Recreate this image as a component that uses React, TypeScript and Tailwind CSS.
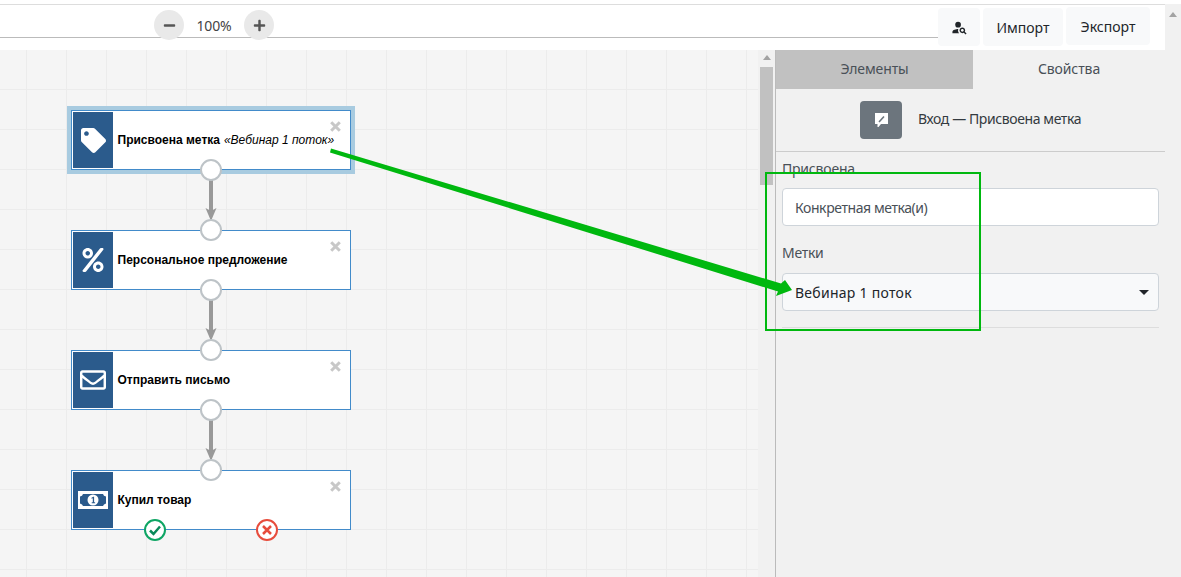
import type { ReactNode } from 'react';
import { FaTag, FaPercent, FaRegEnvelope, FaMinus, FaPlus } from 'react-icons/fa';
import { MdPersonSearch } from 'react-icons/md';

interface FlowNodeProps {
    top: string;
    icon: ReactNode;
    selected?: boolean;
    children: ReactNode;
}

function Port({ className }: { className: string }) {
    return <div className={`absolute left-[200px] w-[22px] h-[22px] rounded-full bg-white border-[2px] border-[#bdc3c7] z-10 ${className}`} />;
}

function FlowNode({ top, icon, selected, children }: FlowNodeProps) {
    return (
        <div className={`absolute left-[71px] w-[280px] h-[60px] bg-white border border-[#428bca] p-px flex ${top} ${selected ? 'outline-4 outline-[#a8cbe0]' : ''}`}>
            <div className="w-[40px] h-full bg-[#2b5b8c] flex items-center justify-center text-white shrink-0">{icon}</div>
            <div className="ml-[4.5px] flex items-center text-[12px] text-black font-['Liberation_Sans',sans-serif] whitespace-nowrap">{children}</div>
            <svg className="absolute right-[9px] top-[10px]" width="11" height="11" viewBox="0 0 11 11">
                <path d="M1.2 1.2 L9.8 9.8 M9.8 1.2 L1.2 9.8" stroke="#c8c8c8" strokeWidth="3" fill="none" />
            </svg>
        </div>
    );
}

function Connector({ top }: { top: string }) {
    return (
        <svg className={`absolute left-[205px] ${top}`} width="12" height="42" viewBox="0 0 12 42">
            <rect x="4" y="0" width="4" height="33" fill="#999999" />
            <path d="M0.5 28 L6 31 L11.5 28 L6 41 Z" fill="#999999" />
        </svg>
    );
}

function ToolButton({ className, children }: { className: string; children: ReactNode }) {
    return <div className={`h-[38px] bg-[#f8f9fa] rounded flex items-center justify-center text-[14px] text-[#212529] ${className}`}>{children}</div>;
}

function BillIcon() {
    return (
        <svg width="30" height="18" viewBox="0 0 30 18">
            <rect width="30" height="18" fill="white" />
            <path d="M5 3 H25 Q25.5 5 28 5.5 V12.5 Q25.5 13 25 15 H5 Q4.5 13 2 12.5 V5.5 Q4.5 5 5 3 Z" fill="#2b5b8c" />
            <circle cx="15" cy="9" r="5.5" fill="white" />
            <path d="M13.5 6.8 L15.3 5.7 H16.1 V11.2 H17.1 V12.2 H13.7 V11.2 H14.8 V7.2 L13.5 7.8 Z" fill="#2b5b8c" />
        </svg>
    );
}

function CommentPencilIcon() {
    return (
        <svg width="16" height="16" viewBox="0 0 16 16">
            <path d="M2 1 H15 V12 H8 L5.5 15 H4.5 V12 H2 Z" fill="white" />
            <path d="M6 10 L11 4.5" stroke="#6c757d" strokeWidth="1.6" fill="none" />
        </svg>
    );
}

export default function App() {
    return (
        <div className="relative w-[1181px] h-[577px] overflow-hidden bg-white flex font-['Noto_Sans',sans-serif]">
            <div className="w-[1165px] flex flex-col">
                {/* Toolbar */}
                <div className="h-[50px] pt-1 shrink-0 flex items-start">
                    <div className="flex-1 h-[34px] border-t border-b border-t-[#dddddd] border-b-[#bbbbbb] flex items-start">
                        <div className="ml-[154px] mt-[5px] flex items-center">
                            <div className="w-[30px] h-[30px] rounded-full bg-[#e9e9e9] flex items-center justify-center text-[#555555]"><FaMinus size={13} /></div>
                            <span className="w-[60px] text-center text-[14px] tracking-[-0.2px] text-[#444444]">100%</span>
                            <div className="w-[30px] h-[30px] rounded-full bg-[#e9e9e9] flex items-center justify-center text-[#555555]"><FaPlus size={13} /></div>
                        </div>
                    </div>
                    <div className="w-[227px] border-t border-[#dddddd] flex items-start pr-[15px] h-[42px]">
                        <ToolButton className="w-[42px] mt-[3px]"><MdPersonSearch size={17} /></ToolButton>
                        <ToolButton className="w-[80px] ml-[3px] mt-[3px]">Импорт</ToolButton>
                        <ToolButton className="w-[84px] ml-[3px] mt-[2px]">Экспорт</ToolButton>
                    </div>
                </div>

                <div className="flex-1 flex min-h-0">
                    {/* Canvas */}
                    <div className="relative w-[758px] bg-[#f5f5f5] bg-[linear-gradient(to_right,#ececec_1px,transparent_1px),linear-gradient(to_bottom,#ececec_1px,transparent_1px)] bg-size-[40px_40px] bg-position-[26px_39px]">
                        <FlowNode top="top-[60px]" selected icon={<FaTag size={25} />}>
                            <b>Присвоена метка</b>
                            <i className="ml-1">«Вебинар 1 поток»</i>
                        </FlowNode>
                        <Port className="top-[109px]" />
                        <Connector top="top-[130px]" />

                        <FlowNode top="top-[180px]" icon={<FaPercent size={24} />}><b>Персональное предложение</b></FlowNode>
                        <Port className="top-[169px]" />
                        <Port className="top-[229px]" />
                        <Connector top="top-[250px]" />

                        <FlowNode top="top-[300px]" icon={<FaRegEnvelope size={26} />}><b>Отправить письмо</b></FlowNode>
                        <Port className="top-[289px]" />
                        <Port className="top-[349px]" />
                        <Connector top="top-[370px]" />

                        <FlowNode top="top-[420px]" icon={<BillIcon />}><b>Купил товар</b></FlowNode>
                        <Port className="top-[409px]" />
                        <svg className="absolute left-[143px] top-[468px] z-10" width="24" height="24" viewBox="0 0 24 24">
                            <circle cx="12" cy="12" r="10" fill="white" stroke="#0ea564" strokeWidth="2" />
                            <path d="M7 12.5 L10.5 16 L17 8.5" fill="none" stroke="#0a8a5a" strokeWidth="2.5" />
                        </svg>
                        <svg className="absolute left-[255px] top-[468px] z-10" width="24" height="24" viewBox="0 0 24 24">
                            <circle cx="12" cy="12" r="10" fill="white" stroke="#e74c3c" strokeWidth="2" />
                            <path d="M8 8 L16 16 M16 8 L8 16" fill="none" stroke="#e74c3c" strokeWidth="2.5" />
                        </svg>
                    </div>

                    {/* Canvas scrollbar */}
                    <div className="w-[17px] bg-[#f1f1f1] pl-[2px] pt-[5px] flex flex-col">
                        <div className="ml-[3px] w-0 h-0 border-x-[4px] border-x-transparent border-b-[5px] border-b-[#a3a3a3]" />
                        <div className="mt-[7px] w-[13px] h-[118px] bg-[#c1c1c1]" />
                    </div>

                    {/* Side panel */}
                    <div className="flex-1 bg-[#f1f1f1] border-l border-[#bbbbbb] flex flex-col">
                        <div className="flex h-[39px] pb-[2px] text-[14px] tracking-[-0.1px] text-[#495057] shrink-0">
                            <div className="w-[197px] -mb-[2px] pb-[2px] bg-[#c1c1c1] flex items-center justify-center">Элементы</div>
                            <div className="flex-1 flex items-center justify-center">Свойства</div>
                        </div>
                        <div className="h-[63px] border-b border-[#cccccc] flex items-center shrink-0 pl-[84px]">
                            <div className="w-[42px] h-[38px] rounded bg-[#6c757d] flex items-center justify-center"><CommentPencilIcon /></div>
                            <span className="ml-4 mb-[3px] text-[14px] tracking-[-0.4px] text-[#343a40]">Вход — Присвоена метка</span>
                        </div>
                        <div className="px-[6px] pt-[6px]">
                            <div className="text-[14px] tracking-[-0.2px] text-[#495057] leading-[21px]">Присвоена</div>
                            <div className="mt-[9px] h-[38px] rounded bg-white border border-[#ced4da] flex items-center px-3 text-[14px] tracking-[-0.42px] text-[#495057]">Конкретная метка(и)</div>
                            <div className="mt-4 text-[14px] tracking-[-0.3px] text-[#495057] leading-[21px]">Метки</div>
                            <div className="mt-[10px] h-[38px] rounded bg-[#f8f9fa] border border-[#ced4da] flex items-center justify-between px-3 pr-[9px] text-[14px] tracking-[0.27px] text-[#212529]">
                                Вебинар 1 поток
                                <div className="w-0 h-0 border-x-[5px] border-x-transparent border-t-[5px] border-t-[#212529]" />
                            </div>
                            <div className="mt-4 border-t border-[#dddddd]" />
                        </div>
                    </div>
                </div>
            </div>

            {/* Page scrollbar */}
            <div className="flex-1 mt-1 bg-[#f1f1f1] pt-[8px] pl-[4px]">
                <div className="w-0 h-0 border-x-[4px] border-x-transparent border-b-[5px] border-b-[#a3a3a3]" />
            </div>

            {/* Annotation drawn over the screenshot */}
            <div className="absolute left-[765px] top-[172px] w-[216px] h-[159px] border-2 border-[#00b80f] z-20" />
            <svg className="absolute left-0 top-0 z-20 pointer-events-none" width="1181" height="577" viewBox="0 0 1181 577">
                <path d="M331 148.5 L781 283.5 L785 280 L792 290 L776 296 L778 291.5 L330 152.5 Z" fill="#00b80f" />
            </svg>
        </div>
    );
}
